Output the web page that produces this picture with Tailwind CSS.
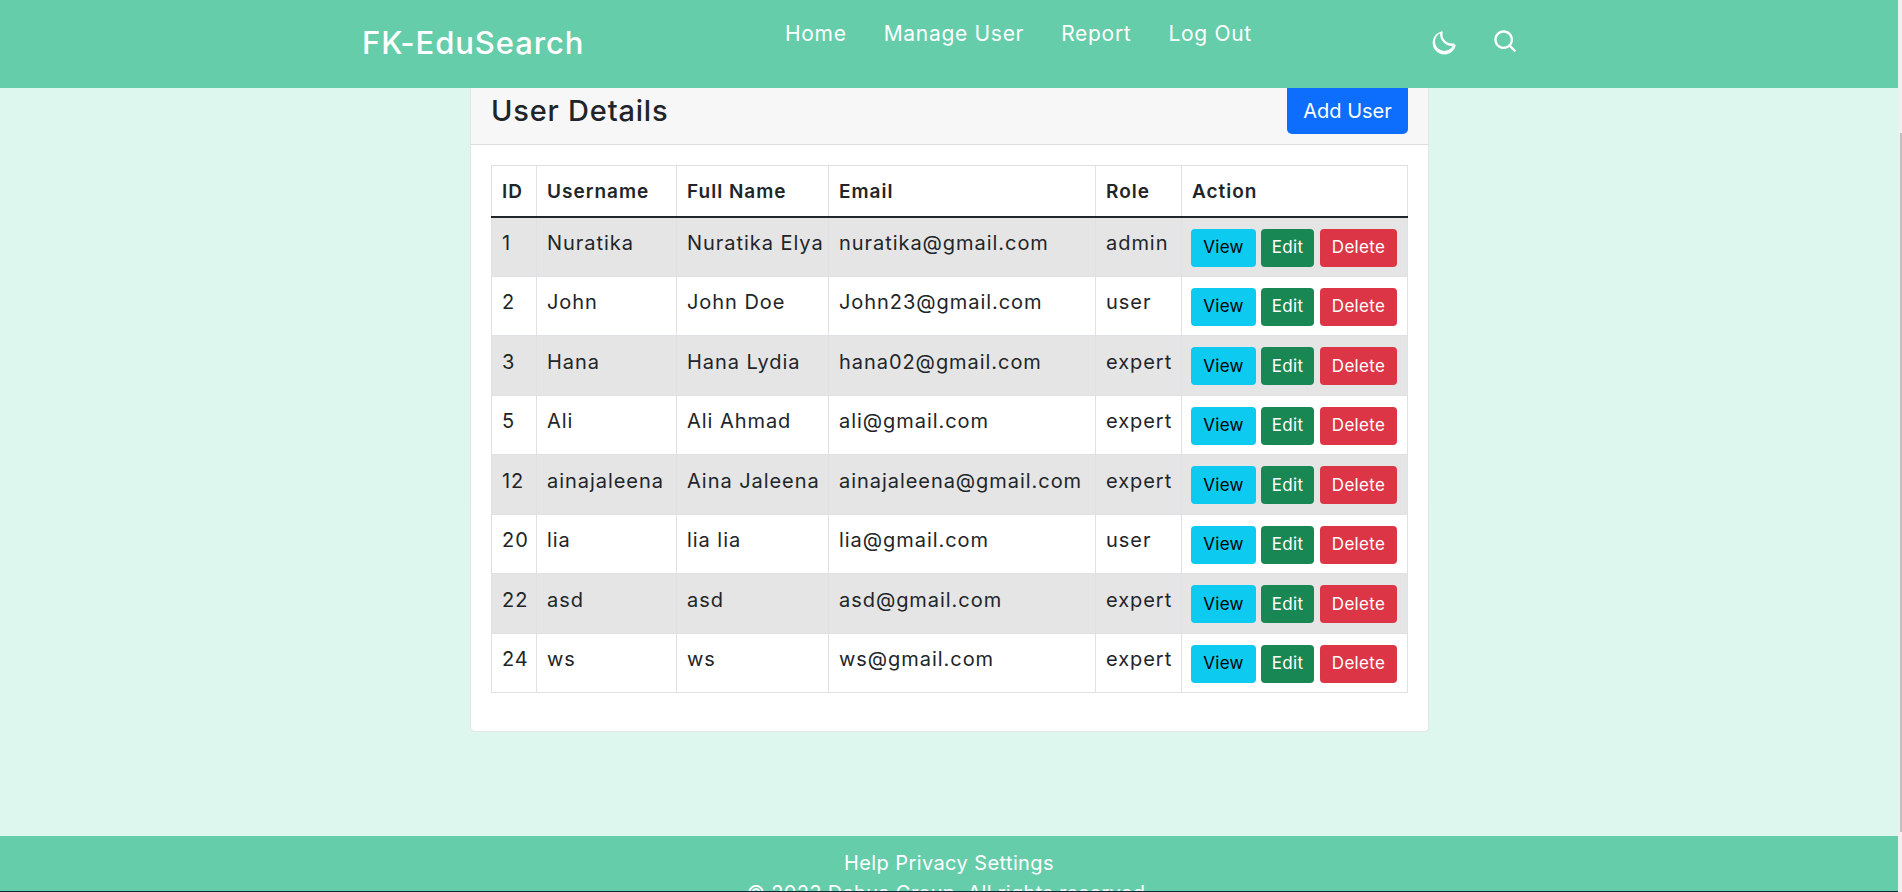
<!DOCTYPE html>
<html lang="en">
  <head>
    <meta charset="UTF-8" />
    <title>User Details - FK-EduSearch</title>
    <script src="https://cdn.jsdelivr.net/npm/@tailwindcss/browser@4"></script>
  </head>

  <body class="h-[892px] overflow-hidden flex bg-[#ddf7ee] font-['Inter',sans-serif] text-[#212529]">
    <div class="w-[1898px] h-[892px] flex flex-col">
      <header class="h-[88px] shrink-0 bg-[#66cdaa] text-white flex items-start">
        <a href="#" class="ml-[362px] mt-[24px] w-[423px] text-[31px] leading-[38px] font-medium tracking-[0.9px]">FK-EduSearch</a>
        <nav class="mt-[20px] flex gap-[37px] text-[21px] leading-[28px] w-[645px] tracking-[0.7px]">
          <a href="#">Home</a>
          <a href="#">Manage User</a>
          <a href="#">Report</a>
          <a href="#">Log Out</a>
        </nav>
        <!-- moon and search -->
        <div class="mt-[28px] flex gap-[34px]">
          <svg class="w-7 h-7" viewBox="0 0 24 24" fill="currentColor"><path d="M20.742 13.045a8.088 8.088 0 0 1-2.077.271c-2.135 0-4.14-.83-5.646-2.336a8.025 8.025 0 0 1-2.064-7.723A1 1 0 0 0 9.73 3.034a10.014 10.014 0 0 0-4.489 2.582c-3.898 3.898-3.898 10.243 0 14.143a9.937 9.937 0 0 0 7.072 2.93 9.93 9.93 0 0 0 7.07-2.929 10.02 10.02 0 0 0 2.583-4.491 1.001 1.001 0 0 0-1.224-1.224zm-2.772 4.301a7.947 7.947 0 0 1-5.656 2.343 7.953 7.953 0 0 1-5.658-2.344c-3.118-3.119-3.118-8.195 0-11.314a7.923 7.923 0 0 1 2.06-1.483 10.027 10.027 0 0 0 2.89 7.848 9.972 9.972 0 0 0 7.848 2.891 8.036 8.036 0 0 1-1.484 2.059z"/></svg>
          <svg class="w-7 h-7" viewBox="0 0 24 24" fill="currentColor"><path d="M10 18a7.952 7.952 0 0 0 4.897-1.688l4.396 4.396 1.414-1.414-4.396-4.396A7.952 7.952 0 0 0 18 10c0-4.411-3.589-8-8-8s-8 3.589-8 8 3.589 8 8 8zm0-14c3.309 0 6 2.691 6 6s-2.691 6-6 6-6-2.691-6-6 2.691-6 6-6z"/></svg>
        </div>
      </header>

      <main class="flex-1 flex justify-center pl-[1px]">
        <div class="w-[959px] h-[644px] bg-white border border-t-0 border-black/10 rounded-b-[5px]">
          <div class="h-[57px] bg-[#f7f7f7] border-b border-black/10 flex items-start justify-between pl-[20px] pr-[20px]">
            <h3 class="text-[29px] leading-[46px] font-medium tracking-[0.8px]">User Details</h3>
            <button class="h-[46px] w-[121px] bg-[#0d6efd] text-white text-[20px] rounded-b-[5px]">Add User</button>
          </div>
          <div class="px-[20px] pt-[20px]">
            <table class="w-[917px] table-fixed border-collapse whitespace-nowrap text-[20px] leading-[27px] tracking-[0.95px]">
              <thead>
                <tr class="h-[51px] border-b-2 border-[#212529] text-[19px] tracking-[1px]">
                  <th class="w-[45px] border border-b-0 border-[#dee2e6] px-[10px] pt-[1px] text-left font-semibold">ID</th>
                  <th class="w-[140px] border border-b-0 border-[#dee2e6] px-[10px] pt-[1px] text-left font-semibold">Username</th>
                  <th class="w-[152px] border border-b-0 border-[#dee2e6] px-[10px] pt-[1px] text-left font-semibold">Full Name</th>
                  <th class="w-[267px] border border-b-0 border-[#dee2e6] px-[10px] pt-[1px] text-left font-semibold">Email</th>
                  <th class="w-[86px] border border-b-0 border-[#dee2e6] px-[10px] pt-[1px] text-left font-semibold">Role</th>
                  <th class="border border-b-0 border-[#dee2e6] px-[10px] pt-[1px] text-left font-semibold">Action</th>
                </tr>
              </thead>
              <tbody>
                <tr class="h-[59.5px] bg-[#e5e5e5]">
                  <td class="border border-[#dee2e6] px-[10px] pb-[6px]">1</td>
                  <td class="border border-[#dee2e6] px-[10px] pb-[6px]">Nuratika</td>
                  <td class="border border-[#dee2e6] px-[10px] pb-[6px]">Nuratika Elya</td>
                  <td class="border border-[#dee2e6] px-[10px] pb-[6px]">nuratika@gmail.com</td>
                  <td class="border border-[#dee2e6] px-[10px] pb-[6px]">admin</td>
                  <td class="border border-[#dee2e6] pl-[9px] pt-[2px]">
                    <div class="flex text-[17px] tracking-[0.3px]">
                      <button class="w-[65px] h-[38px] bg-[#0dcaf0] text-black rounded-[4px]">View</button>
                      <button class="ml-[5px] w-[53px] h-[38px] bg-[#198754] text-white rounded-[4px]">Edit</button>
                      <button class="ml-[6px] w-[77px] h-[38px] bg-[#dc3545] text-white rounded-[4px]">Delete</button>
                    </div>
                  </td>
                </tr>
                <tr class="h-[59.5px] bg-white">
                  <td class="border border-[#dee2e6] px-[10px] pb-[6px]">2</td>
                  <td class="border border-[#dee2e6] px-[10px] pb-[6px]">John</td>
                  <td class="border border-[#dee2e6] px-[10px] pb-[6px]">John Doe</td>
                  <td class="border border-[#dee2e6] px-[10px] pb-[6px]">John23@gmail.com</td>
                  <td class="border border-[#dee2e6] px-[10px] pb-[6px]">user</td>
                  <td class="border border-[#dee2e6] pl-[9px] pt-[2px]">
                    <div class="flex text-[17px] tracking-[0.3px]">
                      <button class="w-[65px] h-[38px] bg-[#0dcaf0] text-black rounded-[4px]">View</button>
                      <button class="ml-[5px] w-[53px] h-[38px] bg-[#198754] text-white rounded-[4px]">Edit</button>
                      <button class="ml-[6px] w-[77px] h-[38px] bg-[#dc3545] text-white rounded-[4px]">Delete</button>
                    </div>
                  </td>
                </tr>
                <tr class="h-[59.5px] bg-[#e5e5e5]">
                  <td class="border border-[#dee2e6] px-[10px] pb-[6px]">3</td>
                  <td class="border border-[#dee2e6] px-[10px] pb-[6px]">Hana</td>
                  <td class="border border-[#dee2e6] px-[10px] pb-[6px]">Hana Lydia</td>
                  <td class="border border-[#dee2e6] px-[10px] pb-[6px]">hana02@gmail.com</td>
                  <td class="border border-[#dee2e6] px-[10px] pb-[6px]">expert</td>
                  <td class="border border-[#dee2e6] pl-[9px] pt-[2px]">
                    <div class="flex text-[17px] tracking-[0.3px]">
                      <button class="w-[65px] h-[38px] bg-[#0dcaf0] text-black rounded-[4px]">View</button>
                      <button class="ml-[5px] w-[53px] h-[38px] bg-[#198754] text-white rounded-[4px]">Edit</button>
                      <button class="ml-[6px] w-[77px] h-[38px] bg-[#dc3545] text-white rounded-[4px]">Delete</button>
                    </div>
                  </td>
                </tr>
                <tr class="h-[59.5px] bg-white">
                  <td class="border border-[#dee2e6] px-[10px] pb-[6px]">5</td>
                  <td class="border border-[#dee2e6] px-[10px] pb-[6px]">Ali</td>
                  <td class="border border-[#dee2e6] px-[10px] pb-[6px]">Ali Ahmad</td>
                  <td class="border border-[#dee2e6] px-[10px] pb-[6px]">ali@gmail.com</td>
                  <td class="border border-[#dee2e6] px-[10px] pb-[6px]">expert</td>
                  <td class="border border-[#dee2e6] pl-[9px] pt-[2px]">
                    <div class="flex text-[17px] tracking-[0.3px]">
                      <button class="w-[65px] h-[38px] bg-[#0dcaf0] text-black rounded-[4px]">View</button>
                      <button class="ml-[5px] w-[53px] h-[38px] bg-[#198754] text-white rounded-[4px]">Edit</button>
                      <button class="ml-[6px] w-[77px] h-[38px] bg-[#dc3545] text-white rounded-[4px]">Delete</button>
                    </div>
                  </td>
                </tr>
                <tr class="h-[59.5px] bg-[#e5e5e5]">
                  <td class="border border-[#dee2e6] px-[10px] pb-[6px]">12</td>
                  <td class="border border-[#dee2e6] px-[10px] pb-[6px]">ainajaleena</td>
                  <td class="border border-[#dee2e6] px-[10px] pb-[6px]">Aina Jaleena</td>
                  <td class="border border-[#dee2e6] px-[10px] pb-[6px]">ainajaleena@gmail.com</td>
                  <td class="border border-[#dee2e6] px-[10px] pb-[6px]">expert</td>
                  <td class="border border-[#dee2e6] pl-[9px] pt-[2px]">
                    <div class="flex text-[17px] tracking-[0.3px]">
                      <button class="w-[65px] h-[38px] bg-[#0dcaf0] text-black rounded-[4px]">View</button>
                      <button class="ml-[5px] w-[53px] h-[38px] bg-[#198754] text-white rounded-[4px]">Edit</button>
                      <button class="ml-[6px] w-[77px] h-[38px] bg-[#dc3545] text-white rounded-[4px]">Delete</button>
                    </div>
                  </td>
                </tr>
                <tr class="h-[59.5px] bg-white">
                  <td class="border border-[#dee2e6] px-[10px] pb-[6px]">20</td>
                  <td class="border border-[#dee2e6] px-[10px] pb-[6px]">lia</td>
                  <td class="border border-[#dee2e6] px-[10px] pb-[6px]">lia lia</td>
                  <td class="border border-[#dee2e6] px-[10px] pb-[6px]">lia@gmail.com</td>
                  <td class="border border-[#dee2e6] px-[10px] pb-[6px]">user</td>
                  <td class="border border-[#dee2e6] pl-[9px] pt-[2px]">
                    <div class="flex text-[17px] tracking-[0.3px]">
                      <button class="w-[65px] h-[38px] bg-[#0dcaf0] text-black rounded-[4px]">View</button>
                      <button class="ml-[5px] w-[53px] h-[38px] bg-[#198754] text-white rounded-[4px]">Edit</button>
                      <button class="ml-[6px] w-[77px] h-[38px] bg-[#dc3545] text-white rounded-[4px]">Delete</button>
                    </div>
                  </td>
                </tr>
                <tr class="h-[59.5px] bg-[#e5e5e5]">
                  <td class="border border-[#dee2e6] px-[10px] pb-[6px]">22</td>
                  <td class="border border-[#dee2e6] px-[10px] pb-[6px]">asd</td>
                  <td class="border border-[#dee2e6] px-[10px] pb-[6px]">asd</td>
                  <td class="border border-[#dee2e6] px-[10px] pb-[6px]">asd@gmail.com</td>
                  <td class="border border-[#dee2e6] px-[10px] pb-[6px]">expert</td>
                  <td class="border border-[#dee2e6] pl-[9px] pt-[2px]">
                    <div class="flex text-[17px] tracking-[0.3px]">
                      <button class="w-[65px] h-[38px] bg-[#0dcaf0] text-black rounded-[4px]">View</button>
                      <button class="ml-[5px] w-[53px] h-[38px] bg-[#198754] text-white rounded-[4px]">Edit</button>
                      <button class="ml-[6px] w-[77px] h-[38px] bg-[#dc3545] text-white rounded-[4px]">Delete</button>
                    </div>
                  </td>
                </tr>
                <tr class="h-[59.5px] bg-white">
                  <td class="border border-[#dee2e6] px-[10px] pb-[6px]">24</td>
                  <td class="border border-[#dee2e6] px-[10px] pb-[6px]">ws</td>
                  <td class="border border-[#dee2e6] px-[10px] pb-[6px]">ws</td>
                  <td class="border border-[#dee2e6] px-[10px] pb-[6px]">ws@gmail.com</td>
                  <td class="border border-[#dee2e6] px-[10px] pb-[6px]">expert</td>
                  <td class="border border-[#dee2e6] pl-[9px] pt-[2px]">
                    <div class="flex text-[17px] tracking-[0.3px]">
                      <button class="w-[65px] h-[38px] bg-[#0dcaf0] text-black rounded-[4px]">View</button>
                      <button class="ml-[5px] w-[53px] h-[38px] bg-[#198754] text-white rounded-[4px]">Edit</button>
                      <button class="ml-[6px] w-[77px] h-[38px] bg-[#dc3545] text-white rounded-[4px]">Delete</button>
                    </div>
                  </td>
                </tr>
              </tbody>
            </table>
          </div>
        </div>
      </main>

      <footer class="h-[56px] shrink-0 bg-[#66cdaa] border-b border-[#0e2a3a] overflow-hidden text-white text-center text-[20px] leading-[30px] pt-[12px]">
        <p class="tracking-[0.4px]">Help Privacy Settings</p>
        <p class="tracking-[0.3px]">© 2023 Dahua Group. All rights reserved.</p>
      </footer>
    </div>
    <!-- scrollbar -->
    <div class="w-[4px] h-[892px] bg-[#f0f0f0] flex justify-end">
      <div class="w-[2px] h-[699px] mt-[133px] bg-[#c1c1c1]"></div>
    </div>
  </body>
</html>
